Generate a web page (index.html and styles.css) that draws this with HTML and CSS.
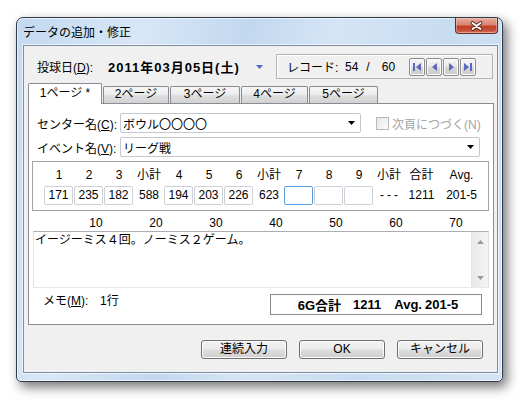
FILE: index.html
```html
<!DOCTYPE html>
<html lang="ja">
<head>
<meta charset="utf-8">
<title>データの追加・修正</title>
<link rel="stylesheet" href="styles.css">
</head>
<body>
<div class="window">
  <div class="titlebar">
    <span class="title">データの追加・修正</span>
    <div class="close">
      <svg width="13" height="10" viewBox="0 0 13 10"><path class="x-out" d="M2.5 2 L10.5 8 M10.5 2 L2.5 8"/><path class="x-in" d="M2.5 2 L10.5 8 M10.5 2 L2.5 8"/></svg>
    </div>
  </div>
  <div class="client">
    <div class="toprow">
      <div class="datearea">
        <span class="dlabel">投球日(<u>D</u>):</span>
        <span class="date">2011年03月05日(土)</span>
        <svg class="ddarrow" width="7" height="4" viewBox="0 0 7 4"><path d="M0 0H7L3.5 4Z"/></svg>
      </div>
      <div class="record">
        <span class="rlabel">レコード:</span>
        <span class="rcur">54</span>
        <span class="rslash">/</span>
        <span class="rtot">60</span>
        <div class="navs">
          <span class="navbtn"><svg width="14" height="16" viewBox="0 0 14 16"><rect x="3" y="4" width="2" height="8"/><path d="M11 4L6 8L11 12Z"/></svg></span>
          <span class="navbtn"><svg width="14" height="16" viewBox="0 0 14 16"><path d="M10 4L5 8L10 12Z"/></svg></span>
          <span class="navbtn"><svg width="14" height="16" viewBox="0 0 14 16"><path d="M5 4L10 8L5 12Z"/></svg></span>
          <span class="navbtn"><svg width="14" height="16" viewBox="0 0 14 16"><path d="M3 4L8 8L3 12Z"/><rect x="9" y="4" width="2" height="8"/></svg></span>
        </div>
      </div>
    </div>
    <div class="tabs">
      <span class="tab sel t1">1ページ *</span>
      <span class="tab t2">2ページ</span>
      <span class="tab t3">3ページ</span>
      <span class="tab t4">4ページ</span>
      <span class="tab t5">5ページ</span>
    </div>
    <div class="panel">
      <div class="row">
        <span class="flabel">センター名(<u>C</u>):</span>
        <div class="combo c1"><span class="cjk">ボウル〇〇〇〇</span><svg width="7" height="4" viewBox="0 0 7 4"><path d="M0 0H7L3.5 4Z"/></svg></div>
        <span class="chk"></span><span class="chklabel">次頁につづく(N)</span>
      </div>
      <div class="row r2">
        <span class="flabel">イベント名(<u>V</u>):</span>
        <div class="combo c2"><span>リーグ戦</span><svg width="7" height="4" viewBox="0 0 7 4"><path d="M0 0H7L3.5 4Z"/></svg></div>
      </div>
      <div class="scores">
        <div class="sgrid head">
          <span>1</span><span>2</span><span>3</span><span>小計</span>
          <span>4</span><span>5</span><span>6</span><span>小計</span>
          <span>7</span><span>8</span><span>9</span><span>小計</span>
          <span>合計</span><span>Avg.</span>
        </div>
        <div class="sgrid vals">
          <span class="cell">171</span><span class="cell">235</span><span class="cell">182</span><span class="val">588</span>
          <span class="cell">194</span><span class="cell">203</span><span class="cell">226</span><span class="val">623</span>
          <span class="cell focus"></span><span class="cell"></span><span class="cell"></span><span class="val dash">---</span>
          <span class="val">1211</span><span class="val">201-5</span>
        </div>
      </div>
      <div class="ruler"><span>10</span><span>20</span><span>30</span><span>40</span><span>50</span><span>60</span><span>70</span></div>
      <div class="memo">
        <div class="memotext">イージーミス４回。ノーミス２ゲーム。</div>
        <div class="vscroll">
          <svg width="7" height="4" viewBox="0 0 7 4"><path d="M0 4H7L3.5 0Z"/></svg>
          <svg width="7" height="4" viewBox="0 0 7 4"><path d="M0 0H7L3.5 4Z"/></svg>
        </div>
      </div>
      <div class="foot">
        <span class="mlabel">メモ(<u>M</u>):</span>
        <span class="mlines">1行</span>
        <div class="summary"><span>6G合計</span><span class="s2">1211</span><span class="s3">Avg.</span><span class="s4">201-5</span></div>
      </div>
    </div>
    <div class="buttons">
      <span class="btn">連続入力</span>
      <span class="btn">OK</span>
      <span class="btn">キャンセル</span>
    </div>
  </div>
</div>
</body>
</html>
```

FILE: styles.css
```css
* { box-sizing: border-box; }
html, body { margin: 0; padding: 0; }
body {
  background: #fff;
  width: 526px;
  height: 400px;
  overflow: hidden;
  font-family: "Liberation Sans", "Noto Sans CJK JP", sans-serif;
  font-size: 12px;
  color: #000;
}
u { text-decoration: underline; text-underline-offset: 1px; }
.cjk { font-family: "Noto Sans CJK JP", sans-serif; }

.window {
  margin: 17px 0 0 16px;
  width: 487px;
  height: 365px;
  border: 1px solid #2f3b48;
  border-radius: 7px 7px 5px 5px;
  padding: 0 4px 8px 6px;
  background: linear-gradient(105deg, #c3d9f0 0%, #d8e7f7 22%, #c2d8ef 40%, #d5e5f6 55%, #c8dcf1 75%, #d3e4f5 100%);
  box-shadow: inset 0 0 0 1px rgba(255,255,255,.6), 4px 5px 12px rgba(0,0,0,.55);
}
.titlebar {
  height: 27px;
  display: flex;
  justify-content: space-between;
  align-items: flex-start;
}
.title {
  line-height: 27px;
  font-family: "Noto Sans CJK JP", sans-serif;
}
.close {
  width: 43px;
  height: 16px;
  border: 1px solid #6b2b20;
  border-top: none;
  border-radius: 0 0 4px 4px;
  background: linear-gradient(#e8ab9d 0%, #d98573 45%, #c13f25 55%, #c6523a 85%, #d77b63 100%);
  box-shadow: inset 0 0 0 1px rgba(255,215,205,.45);
  display: flex;
  align-items: center;
  justify-content: center;
}
.x-out { stroke: #4b241c; stroke-width: 3.6; stroke-linecap: round; fill: none; }
.x-in { stroke: #fff; stroke-width: 2; stroke-linecap: round; fill: none; }

.client {
  width: 475px;
  height: 328px;
  border: 1px solid #7b8ea5;
  background: #f0f0f0;
  padding: 8px 3px 0 4px;
  box-shadow: 0 0 0 1px rgba(255,255,255,.65);
}

.toprow {
  display: flex;
  justify-content: space-between;
  align-items: center;
  height: 25px;
}
.datearea { display: flex; align-items: center; padding-left: 9px; }
.dlabel { width: 71px; }
.date { font-weight: bold; font-size: 13px; letter-spacing: 1px; }
.ddarrow { margin-left: 16px; fill: #5467c8; }
.record {
  width: 217px;
  height: 25px;
  margin-right: 1px;
  border: 1px solid #b4b4b4;
  box-shadow: inset 1px 1px 0 #fff;
  display: flex;
  align-items: center;
  padding-left: 10px;
}
.rlabel { width: 58px; }
.rslash { margin-left: 8px; }
.rtot { margin-left: 12px; }
.navs { display: flex; gap: 1px; margin-left: auto; margin-right: 16px; }
.navbtn {
  width: 16px;
  height: 18px;
  border: 1px solid #8d8d8d;
  border-radius: 2px;
  background: linear-gradient(#f7f7f7, #e6e6e6 50%, #d6d6d6 52%, #cdcdcd);
  box-shadow: inset 0 0 0 1px #fafafa;
  display: flex;
}
.navbtn svg { fill: #5a69c0; }

.tabs {
  display: flex;
  align-items: flex-end;
  height: 20px;
  margin-top: 4px;
  gap: 1px;
}
.tab {
  height: 17px;
  border: 1px solid #898c95;
  border-bottom: none;
  border-radius: 2px 2px 0 0;
  background: linear-gradient(#f6f6f6, #ededed 45%, #dedede 55%, #d2d2d2);
  text-align: center;
  line-height: 15px;
}
.tab.sel {
  position: relative;
  height: 21px;
  margin-bottom: -1px;
  background: #fff;
  line-height: 18px;
}
.t1 { width: 74px; }
.t2 { width: 66px; }
.t3 { width: 70px; }
.t4 { width: 67px; }
.t5 { width: 69px; }

.panel {
  width: 466px;
  height: 222px;
  border: 1px solid #898c95;
  background: #fff;
  padding-top: 9px;
}
.row { display: flex; align-items: center; height: 20px; }
.r2 { margin-top: 4px; }
.flabel { width: 83px; margin-left: 8px; }
.combo {
  height: 20px;
  border: 1px solid #c3c7ce;
  border-radius: 2px;
  display: flex;
  align-items: center;
  justify-content: space-between;
  padding: 0 5px 0 2px;
  background: #fff;
}
.combo svg { fill: #000; }
.c1 { width: 241px; }
.c2 { width: 360px; }
.chk {
  width: 13px;
  height: 13px;
  margin-left: 15px;
  border: 1px solid #b8b8b8;
  background: linear-gradient(135deg, #e6e6e6, #fbfbfb);
}
.chklabel { margin-left: 3px; color: #a3a3a3; }

.scores {
  width: 457px;
  height: 50px;
  margin: 4px 0 0 3px;
  border: 1px solid #a4a4a4;
  padding: 6px 0 0 11px;
}
.sgrid {
  display: grid;
  grid-template-columns: repeat(12, 30px) 35px 45px;
  text-align: center;
}
.head { height: 14px; line-height: 14px; }
.vals { margin-top: 4px; height: 19px; align-items: center; }
.cell {
  width: 29px;
  height: 19px;
  border: 1px solid #cdd2d9;
  border-radius: 2px;
  line-height: 17px;
}
.cell.focus { border-color: #5b9be0; }
.val { line-height: 19px; }
.dash { letter-spacing: 3px; padding-left: 3px; }

.ruler {
  height: 20px;
  padding: 5px 0 0 37px;
  display: flex;
  line-height: 14px;
}
.ruler span { width: 60px; text-align: center; }

.memo {
  width: 456px;
  height: 57px;
  margin-left: 4px;
  border: 1px solid;
  border-color: #abadb3 #dbdfe6 #e3e9ef #e2e3ea;
  display: flex;
}
.memotext {
  flex: 1;
  padding: 1px 0 0 1px;
  line-height: 14px;
}
.vscroll {
  width: 17px;
  background: linear-gradient(90deg, #e9e9e9, #f4f4f4);
  border-left: 1px solid #e4e4e4;
  display: flex;
  flex-direction: column;
  justify-content: space-between;
  align-items: center;
  padding: 8px 0 7px;
}
.vscroll svg { fill: #9a9a9a; }

.foot { display: flex; align-items: flex-start; margin-top: 6px; height: 21px; }
.mlabel { width: 57px; margin-left: 14px; line-height: 14px; }
.mlines { width: 170px; line-height: 14px; }
.summary {
  width: 212px;
  height: 21px;
  border: 1px solid #8a8a8a;
  display: flex;
  align-items: center;
  justify-content: center;
  padding-left: 4px;
  font-weight: bold;
  font-size: 13px;
}
.s2 { margin-left: 12px; }
.s3 { margin-left: 13px; }
.s4 { margin-left: 3px; }

.buttons {
  display: flex;
  justify-content: flex-end;
  gap: 12px;
  margin-top: 15px;
  margin-right: 11px;
}
.btn {
  width: 86px;
  height: 19px;
  border: 1px solid #707070;
  border-radius: 3px;
  background: linear-gradient(#f2f2f2 0%, #ebebeb 48%, #dddddd 52%, #cfcfcf 100%);
  box-shadow: inset 0 0 0 1px #fbfbfb;
  display: flex;
  align-items: center;
  justify-content: center;
  line-height: 17px;
}
```
